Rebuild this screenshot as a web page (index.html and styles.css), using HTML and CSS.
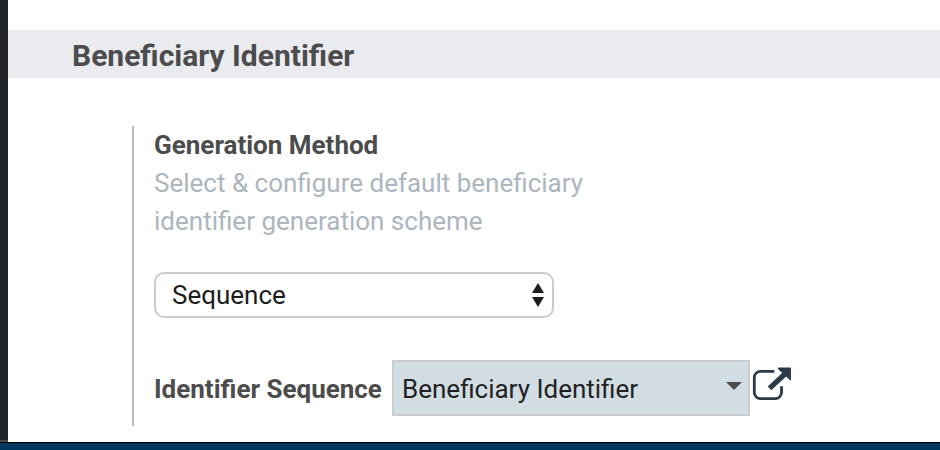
FILE: index.html
```html
<!DOCTYPE html>
<html lang="en">
<head>
<meta charset="utf-8">
<title>Beneficiary settings</title>
<link rel="stylesheet" href="styles.css">
</head>
<body>
<div class="page">
  <div class="content">
    <aside class="rail"></aside>
    <main class="panel">
      <h2 class="heading">Beneficiary Identifier</h2>
      <section class="setting">
        <h3 class="title">Generation Method</h3>
        <p class="help">Select &amp; configure default beneficiary<br>identifier generation scheme</p>
        <div class="select"><span>Sequence</span>
          <svg class="arrows" width="12" height="24" viewBox="0 0 12 24"><path d="M6 0 12 10H0zM6 24 0 14H12z"/></svg>
        </div>
        <div class="row">
          <span class="label">Identifier Sequence</span>
          <div class="combo"><span class="combo-text">Beneficiary Identifier</span>
            <svg class="caret" width="16" height="8" viewBox="0 0 16 8"><path d="M0 0h16L8 8z"/></svg>
          </div>
          <svg class="external" width="40" height="36" viewBox="0 0 40 36"><path d="M22.300 5.300H8.500A6.200 6.200 0 0 0 2.300 11.500V26.500A6.200 6.200 0 0 0 8.500 32.700H23.300A6.200 6.200 0 0 0 29.500 26.500V20.300" class="box"/><path d="M17.500 22.300 34 7" class="shaft"/><path d="M26.500 1.500H38Q39 1.500 39 2.500V13.500Q39 15 37.800 14L26 3Q25.300 1.700 26.500 1.500z" class="head"/></svg>
        </div>
      </section>
    </main>
  </div>
  <footer class="bar"></footer>
</div>
</body>
</html>
```
FILE: styles.css
```css
* { box-sizing: border-box; }
body { margin: 0; font-family: Roboto, sans-serif; font-size: 26px; color: #4c4c4c; background: #fff; }
.page { height: 450px; display: flex; flex-direction: column; overflow: hidden; }
.content { flex: 1; display: flex; }
.rail { width: 8px; background: #212529; border-bottom: 2px solid #4c4c4c; }
.panel { flex: 1; padding-top: 30px; }
.heading { margin: 0; height: 48px; padding-left: 64px; background: #eaebef; font-size: 30px; font-weight: 700; line-height: 52px; }
.setting { margin: 48px 0 0 124px; height: 300px; border-left: 2px solid #bbb; padding-left: 20px; }
.title { margin: 0; font-size: 26px; line-height: 38px; font-weight: 700; }
.help { margin: 0; line-height: 38px; color: #adb5bd; }
.select { margin-top: 32px; width: 400px; height: 46px; border: 2px solid #ccc; border-radius: 10px; padding: 0 8px 0 16px; display: flex; align-items: center; justify-content: space-between; color: #1d1d1d; }
.arrows { fill: #1d1d1d; }
.row { display: flex; align-items: center; margin-top: 42px; height: 56px; }
.label { width: 238px; padding-top: 2px; font-weight: 700; white-space: nowrap; }
.combo { width: 358px; height: 56px; border: 2px solid #ccc; background: #d2dde3; padding: 0 6px 0 8px; display: flex; align-items: center; justify-content: space-between; color: #222; }
.combo-text { padding-top: 2px; }
.caret { margin-bottom: 4px; fill: #4c4c4c; }
.external { margin: -8px 0 0 2px; fill: none; stroke: #2b3a46; stroke-width: 2.800; }
.external .shaft { stroke-width: 5.200; }
.external .head { fill: #2b3a46; stroke: none; }
.bar { height: 8px; background: #00385f; border-top: 1px solid #000; }
```
